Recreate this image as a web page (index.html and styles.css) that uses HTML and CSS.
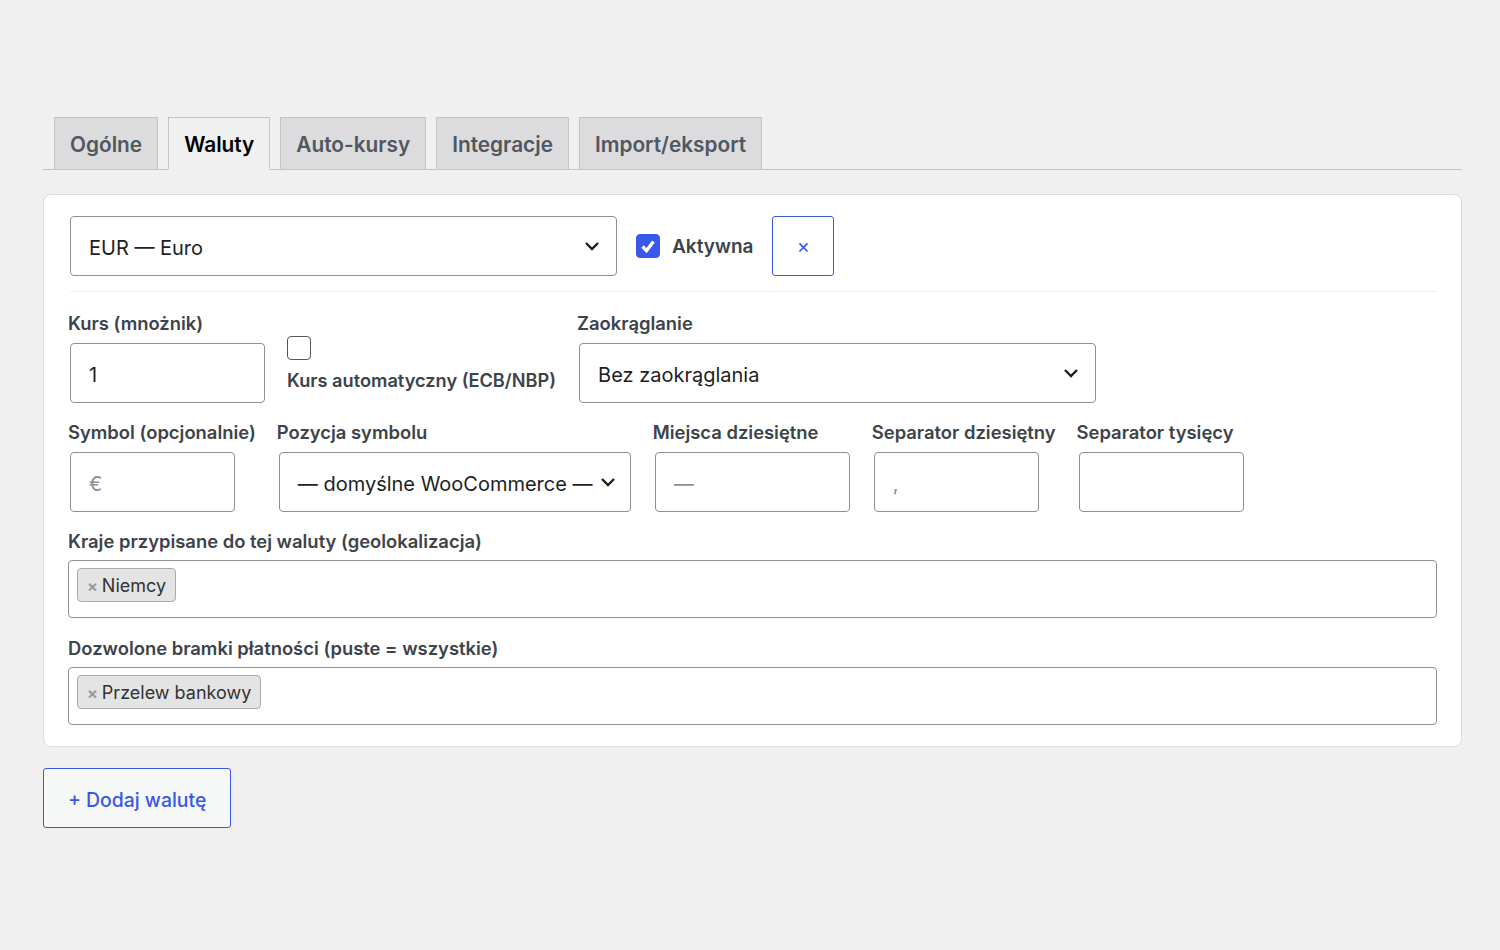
FILE: index.html
```html
<!DOCTYPE html>
<html lang="pl">

<head>
  <meta charset="UTF-8">
  <meta name="viewport" content="width=device-width, initial-scale=1.0">
  <title>Waluty</title>
  <link rel="stylesheet" href="styles.css">
</head>

<body>
  <div class="wrap">
    <nav class="nav-tabs">
      <a class="tab">Ogólne</a>
      <a class="tab active">Waluty</a>
      <a class="tab">Auto-kursy</a>
      <a class="tab">Integracje</a>
      <a class="tab">Import/eksport</a>
    </nav>

    <div class="card">
      <div class="row-top">
        <div class="select select-currency">
          <span>EUR — Euro</span>
          <svg class="chevron" viewBox="0 0 16 10" width="16" height="10"><path d="M2 2l6 6 6-6" /></svg>
        </div>
        <label class="check">
          <span class="box checked">
            <svg viewBox="0 0 24 24" width="24" height="24"><path d="M6.5 12.5l4 4.2 7-9.2" /></svg>
          </span>
          Aktywna
        </label>
        <button class="btn-remove">×</button>
      </div>

      <div class="divider"></div>

      <div class="rows">
        <div class="row">
          <div class="field">
            <label>Kurs (mnożnik)</label>
            <input class="input w195" type="text" value="1">
          </div>
          <div class="field field-auto">
            <span class="box"></span>
            <span class="auto-text">Kurs automatyczny (ECB/NBP)</span>
          </div>
          <div class="field">
            <label>Zaokrąglanie</label>
            <div class="select w517">
              <span>Bez zaokrąglania</span>
              <svg class="chevron" viewBox="0 0 16 10" width="16" height="10"><path d="M2 2l6 6 6-6" /></svg>
            </div>
          </div>
        </div>

        <div class="row">
          <div class="field">
            <label>Symbol (opcjonalnie)</label>
            <input class="input w165" type="text" placeholder="€">
          </div>
          <div class="field">
            <label>Pozycja symbolu</label>
            <div class="select w352 tight">
              <span>— domyślne WooCommerce —</span>
              <svg class="chevron" viewBox="0 0 16 10" width="16" height="10"><path d="M2 2l6 6 6-6" /></svg>
            </div>
          </div>
          <div class="field">
            <label>Miejsca dziesiętne</label>
            <input class="input w195" type="text" placeholder="—">
          </div>
          <div class="field">
            <label>Separator dziesiętny</label>
            <input class="input w165" type="text" placeholder=",">
          </div>
          <div class="field">
            <label>Separator tysięcy</label>
            <input class="input w165" type="text">
          </div>
        </div>

        <div class="field full">
          <label>Kraje przypisane do tej waluty (geolokalizacja)</label>
          <div class="multi">
            <span class="choice"><span class="x">×</span>Niemcy</span>
          </div>
        </div>

        <div class="field full gateways">
          <label>Dozwolone bramki płatności (puste = wszystkie)</label>
          <div class="multi">
            <span class="choice"><span class="x">×</span>Przelew bankowy</span>
          </div>
        </div>
      </div>
    </div>

    <button class="btn-add">+ Dodaj walutę</button>
  </div>
</body>

</html>
```

FILE: styles.css
```css
:root {
  --bg: #f0f0f1;
  --blue: #3858e9;
  --border: #8c8f94;
  --label: #3c434a;
  --text: #1e1e1e;
}

html,
body {
  margin: 0;
  background: var(--bg);
  font-family: Inter, "Noto Sans", sans-serif;
  color: var(--text);
}

.wrap {
  margin: 0 38px 0 43px;
  padding-top: 117px;
}

/* tabs */
.nav-tabs {
  display: flex;
  gap: 10px;
  padding-left: 11px;
  border-bottom: 1px solid #c3c4c7;
}

.tab {
  box-sizing: border-box;
  margin-bottom: -1px;
  height: 53px;
  line-height: 53px;
  padding: 0 15px;
  background: #dcdcde;
  border: 1px solid #c3c4c7;
  font-size: 20.8px;
  font-weight: 600;
  color: #50575e;

  &.active {
    background: var(--bg);
    border-bottom-color: var(--bg);
    color: #000;
  }
}

/* card */
.card {
  margin-top: 24px;
  background: #fff;
  border: 1px solid #dcdcde;
  border-radius: 8px;
  padding: 21px 24px 21px;
}

.row-top {
  display: flex;
  align-items: center;
}

.select {
  box-sizing: border-box;
  height: 60px;
  margin: 0 1px 0 2px;
  display: flex;
  align-items: center;
  justify-content: space-between;
  padding: 3px 16px 0 18px;
  border: 1px solid var(--border);
  border-radius: 4px;
  background: #fff;
  font-size: 20px;
  color: var(--text);

  &.tight {
    padding-right: 14px;
  }

  & .chevron {
    margin-top: -3px;
  }
}

.select-currency {
  width: 547px;
  margin-right: 0;
}

.chevron {
  flex-shrink: 0;

  & path {
    fill: none;
    stroke: #1e1e1e;
    stroke-width: 2.4;
  }
}

.check {
  display: flex;
  align-items: center;
  gap: 12px;
  margin-left: 19px;
  font-size: 19px;
  font-weight: 600;
  color: var(--label);
}

.box {
  box-sizing: border-box;
  display: block;
  width: 24px;
  height: 24px;
  border: 1px solid #50575e;
  border-radius: 4px;
  background: #fff;

  &.checked {
    background: var(--blue);
    border-color: var(--blue);

    & svg {
      display: block;
      margin: -1px;
    }

    & path {
      fill: none;
      stroke: #fff;
      stroke-width: 3.4;
    }
  }
}

.btn-remove {
  margin-left: 19px;
  width: 62px;
  height: 60px;
  border: 1px solid var(--blue);
  border-radius: 3px;
  background: #fff;
  color: var(--blue);
  font-family: inherit;
  font-size: 20px;
  padding: 0;
}

.divider {
  height: 1px;
  background: var(--bg);
  margin: 15px 0 20px 2px;
}

.rows {
  display: flex;
  flex-direction: column;
  gap: 18px;
}

.row {
  display: flex;
  gap: 21px;
}

.field {
  display: flex;
  flex-direction: column;

  & label {
    display: block;
    font-size: 18.4px;
    font-weight: 600;
    line-height: 22px;
    margin-bottom: 9px;
    color: var(--label);
    white-space: nowrap;
  }
}

.field.full label {
  margin-bottom: 8px;
}

.field.gateways {
  margin-top: 1px;
}

.field-auto {
  padding-top: 24px;
}

.auto-text {
  margin-top: 9px;
  font-size: 18.2px;
  font-weight: 600;
  line-height: 22px;
  color: var(--label);
  white-space: nowrap;
}

.input {
  box-sizing: border-box;
  height: 60px;
  margin: 0 1px 0 2px;
  padding: 3px 18px 0;
  border: 1px solid var(--border);
  border-radius: 4px;
  font-family: inherit;
  font-size: 20px;
  color: var(--text);
  outline: none;

  &::placeholder {
    color: #8c8f94;
  }
}

.w165 {
  width: 165px;
}

.w195 {
  width: 195px;
}

.w352 {
  width: 352px;
}

.w517 {
  width: 517px;
}

.multi {
  box-sizing: border-box;
  height: 58px;
  border: 1px solid var(--border);
  border-radius: 4px;
  padding: 7px 8px;
  display: flex;
  align-items: flex-start;
}

.choice {
  display: inline-flex;
  align-items: center;
  height: 34px;
  padding: 1px 9px 0 9px;
  box-sizing: border-box;
  background: #e4e4e4;
  border: 1px solid #aaa;
  border-radius: 4px;
  font-size: 18px;
  color: #333;

  & .x {
    color: #999;
    font-weight: 700;
    font-size: 16px;
    margin-right: 4px;
  }
}

.btn-add {
  margin-top: 21px;
  height: 60px;
  padding: 3px 24px 0;
  border: 1px solid var(--blue);
  border-radius: 3px;
  background: #f6f7f7;
  color: var(--blue);
  font-family: inherit;
  font-size: 19.4px;
  font-weight: 500;
}
```
